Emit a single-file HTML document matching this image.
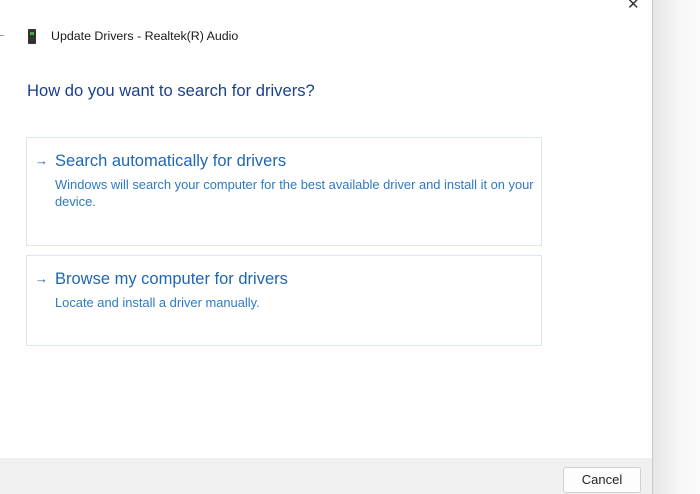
<!DOCTYPE html>
<html><head><meta charset="utf-8"><style>
body{margin:0;width:700px;height:494px;overflow:hidden;background:#fff;font-family:"Liberation Sans",sans-serif;position:relative}
.side{position:absolute;left:652px;top:0;width:48px;height:494px;border-left:1px solid #c8c8c8;background:linear-gradient(90deg,#e6e6e6,#f8f8f8 60%,#fafafa)}
.x{position:absolute;left:627px;top:-5px;font-size:15px;color:#333}
.tick{position:absolute;left:0;top:35px;width:4px;height:1px;background:#999}
.title{position:absolute;left:51px;top:29px;font-size:12.4px;color:#1a1a1a}
.icon{position:absolute;left:28px;top:29px;width:8px;height:15px;background:#333;border-radius:1px}
.icon:after{content:"";position:absolute;left:2px;top:3px;width:4px;height:3px;background:#4a4}
h1{position:absolute;left:27px;top:81px;margin:0;font-weight:normal;font-size:16.6px;color:#1c3f8c}
.card{position:absolute;left:26px;width:514px;border:1px solid #dfe7ee;background:#fff}
.card .h{position:absolute;left:28px;top:14px;font-size:16.5px;color:#1f67b1}
.card .ar{position:absolute;left:8px;top:15px;font-size:13px;color:#1f67b1}
.card .d{position:absolute;left:28px;top:38px;font-size:12.9px;line-height:17px;color:#2d7ac4;width:485px}
.foot{position:absolute;left:0;top:458px;width:652px;height:36px;background:#f0f0f0}
.btn{position:absolute;left:563px;top:467px;width:76px;height:24px;border:1px solid #d0d0d0;border-radius:3px;background:#fdfdfd;font-size:13px;text-align:center;line-height:24px;color:#222}
</style></head><body>
<div class="side"></div>
<div class="x">✕</div>
<div class="tick"></div>
<div class="icon"></div>
<div class="title">Update Drivers - Realtek(R) Audio</div>
<h1>How do you want to search for drivers?</h1>
<div class="card" style="top:137px;height:107px"><span class="ar">→</span><div class="h">Search automatically for drivers</div><div class="d">Windows will search your computer for the best available driver and install it on your device.</div></div>
<div class="card" style="top:255px;height:89px"><span class="ar">→</span><div class="h">Browse my computer for drivers</div><div class="d">Locate and install a driver manually.</div></div>
<div class="foot"></div>
<div class="btn">Cancel</div>
</body></html>
